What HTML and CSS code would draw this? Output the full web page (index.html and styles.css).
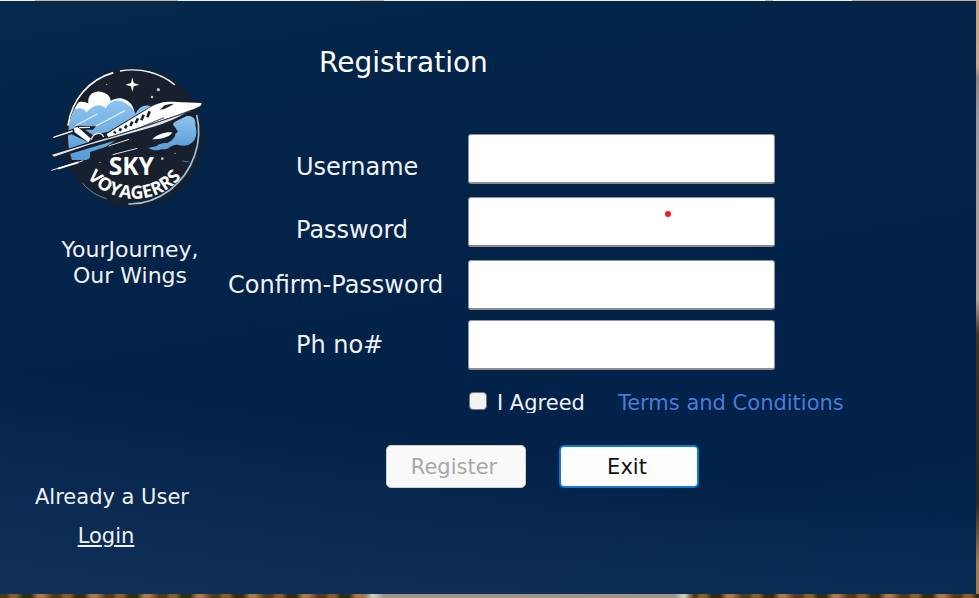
FILE: index.html
```html
<!DOCTYPE html>
<html lang="en">
<head>
<meta charset="utf-8">
<title>Sky Voyagerrs</title>
<link rel="stylesheet" href="styles.css">
</head>
<body>
<div class="panel">
  <aside class="side">
    <div class="brand">
      <svg class="logo" viewBox="0 0 540 495" role="img" aria-label="Sky Voyagerrs">
        <defs>
          <clipPath id="disc"><circle cx="280" cy="247" r="196"/></clipPath>
          <path id="arc" d="M96 244 A187 187 0 0 0 470 244"/>
          <linearGradient id="sky" x1="0" y1="0" x2="0" y2="1">
            <stop offset="0" stop-color="#8fc4ee"/><stop offset="1" stop-color="#559bd6"/>
          </linearGradient>
        </defs>
        <circle cx="280" cy="247" r="210" fill="#17202c"/>
        <g clip-path="url(#disc)">
          <path fill="#fff" d="M85 165 C105 140 125 135 145 145 C142 120 160 108 180 110 C203 112 213 128 212 138 C235 122 260 130 274 148 C285 165 285 178 280 195 L80 215Z"/>
          <path fill="url(#sky)" d="M85 180 C95 160 125 150 140 172 C155 152 180 142 197 160 C207 138 232 130 252 142 C270 152 284 165 287 177 C295 155 318 145 336 156 L350 160 L250 240 L140 315 L70 315Z"/>
          <path fill="url(#sky)" d="M400 205 C430 175 470 175 466 210 C480 260 445 280 415 270 C395 265 390 285 365 283 C350 290 330 283 325 278 L355 272 L340 264 L382 264 C405 252 412 238 400 225Z"/>
        </g>
        <path fill="none" stroke="#f4f7fa" stroke-width="5" d="M84 212 C95 135 145 75 220 53"/>
        <path fill="none" stroke="#f4f7fa" stroke-width="4" d="M240 48 C300 38 360 52 405 90"/>
        <path fill="none" stroke="#91c4e6" stroke-width="5" d="M470 180 C490 260 460 350 390 405 C350 435 305 448 265 447"/>
        <path fill="none" stroke="#4f8ec0" stroke-width="3" d="M128 385 C148 408 170 422 200 431"/>
        <path fill="#fff" d="M277 67 L281 84 L298 89 L281 94 L277 111 L273 94 L256 89 L273 84Z"/>
        <g fill="#b8c8d5"><circle cx="355" cy="104" r="5"/><circle cx="336" cy="126" r="4"/><circle cx="200" cy="88" r="2"/><circle cx="367" cy="311" r="4"/><circle cx="180" cy="322" r="2"/><circle cx="405" cy="295" r="2"/></g>
        <path stroke="#d9edfb" stroke-width="4" d="M105 213 L172 177 M168 213 L256 166"/>
        <path fill="#17202c" d="M30 250 L45 238 L98 222 L110 212 L168 214 L158 224 L135 224 L158 240 L205 230 L325 158 C345 142 370 136 400 138 L485 140 C500 145 488 158 470 165 C420 195 380 215 330 226 L40 311 L26 300 L145 262 L95 238Z"/>
        <path fill="#fff" d="M200 237 L318 165 C350 141 380 139 410 141 L484 144 C489 151 472 159 450 166 C415 180 370 196 325 209 L205 247Z"/>
        <path fill="#dfe4e9" d="M36 299 L150 265 L310 215 L440 172 C405 194 360 211 325 220 L145 270 L42 305Z"/>
        <path stroke="#39434f" stroke-width="3" d="M200 250 L325 211 L452 168 M290 222 L372 188"/>
        <path fill="#fff" d="M101 218 L114 217 L153 251 L145 262 L104 232Z"/>
        <path stroke="#f2f4f6" stroke-width="4" d="M40 247 L98 228 M117 218 L150 217"/>
        <path fill="none" stroke="#eef2f5" stroke-width="4" d="M154 254 C158 234 183 228 191 246"/>
        <path fill="#17202c" d="M360 164 L374 151 Q386 146 402 146 L391 153 L373 162Z"/>
        <path stroke="#17202c" stroke-width="8" d="M329 169 L322 187 M311 179 L304 196 M294 190 L287 204 M277 200 L271 213 M260 211 L255 220 M243 220 L239 228 M226 229 L223 235"/>
        <path fill="#17202c" d="M150 291 L325 235 L402 212 L414 230 L373 263 L320 280 L150 311Z"/>
        <path fill="#f4f6f7" d="M337 253 C355 234 384 229 397 233 C388 247 362 252 337 253Z"/>
        <path stroke="#dce4ea" stroke-width="3" d="M206 273 L267 253 M218 299 L292 280 M34 346 L130 317"/>
        <path stroke="#fff" stroke-width="5" d="M54 341 L115 322"/>
        <path stroke="#45759b" stroke-width="3" d="M427 318 L448 321"/>
        <text class="logo-sky" x="274" y="359" text-anchor="middle">SKY</text>
        <text class="logo-arc"><textPath href="#arc" startOffset="50%" text-anchor="middle">VOYAGERRS</textPath></text>
      </svg>
      <p class="tagline">YourJourney,<br>Our Wings</p>
    </div>
    <div class="existing">
      <p>Already a User</p>
      <a class="login" href="#login">Login</a>
    </div>
  </aside>
  <main class="main">
    <h1>Registration</h1>
    <form>
      <div class="field">
        <label class="low" for="username">Username</label>
        <input id="username" type="text">
      </div>
      <div class="field">
        <label class="low" for="password">Password</label>
        <div class="marked"><input id="password" type="password"><span class="dot"></span></div>
      </div>
      <div class="field">
        <label class="long" for="confirm">Confirm-Password</label>
        <input id="confirm" type="password">
      </div>
      <div class="field last">
        <label for="phone">Ph no#</label>
        <input id="phone" type="tel">
      </div>
      <div class="consent">
        <input id="agree" type="checkbox">
        <label for="agree">I Agreed</label>
        <a href="#terms">Terms and Conditions</a>
      </div>
      <div class="actions">
        <button class="register" type="submit" disabled>Register</button>
        <button class="exit" type="button">Exit</button>
      </div>
    </form>
  </main>
</div>
</body>
</html>
```
FILE: styles.css
```css
* { box-sizing: border-box; }

body {
  display: flex;
  min-height: 100vh;
  margin: 0;
  padding: 1px 3px 4px 0;
  color: #f0f2f5;
  font: 21px/26px "DejaVu Sans", Verdana, sans-serif;
  /* landscape behind the panel: sky on top, rocks at right, road at the bottom */
  background:
    linear-gradient(90deg, #f5efdf 35px, #d3b58e 35px 178px, #f5efdf 178px 360px, #d3b58e 360px 384px, #f5efdf 384px 765px, #d3b58e 765px 773px, #f5efdf 773px 852px, #cfae88 852px) top / 100% 1px no-repeat,
    linear-gradient(90deg, transparent 362px, #d8cfc8 372px, #a2928d 384px 675px, #d8cfc8 684px, transparent 694px) bottom / 100% 4px no-repeat,
    repeating-linear-gradient(90deg, #4c3a20 0 7px, #80602f 11px 17px, #302a1b 23px 31px, #a47b4c 38px 43px, #4c3a20 53px) bottom / 100% 4px no-repeat,
    linear-gradient(#cda17a, #d0a98b 11%, #8e8589 13%, #9a9ba5 20%, #b5a397 50%, #3b3322 56%, #252a22 84%, #a37b4e 94%);
}

h1, p { margin: 0; }

.panel {
  display: flex;
  flex: 1;
  background:
    linear-gradient(8deg, rgba(19, 51, 90, 0.9) 0%, rgba(16, 48, 88, 0) 30%),
    linear-gradient(170deg, #06284c 0%, #032349 25%, #022249 80%, #052750 100%);
}

.side {
  display: flex;
  flex: 0 0 228px;
  flex-direction: column;
  justify-content: space-between;
  padding: 54px 0 45px;
}

.brand { padding-left: 40px; }
.logo { display: block; width: 180px; height: 165px; }
.logo text { fill: #fff; font-family: "Open Sans", sans-serif; font-weight: 700; }
.logo-sky { font-size: 74px; }
.logo-arc { font-size: 54px; }
.tagline { width: 180px; margin-top: 17px; font-size: 22px; text-align: center; }

.existing {
  display: flex;
  flex-direction: column;
  align-items: center;
  gap: 13px;
  padding-right: 4px;
}
.login { padding-right: 12px; color: inherit; }

.main { flex: 1; min-width: 0; padding: 44px 24px 24px 0; }

h1 {
  margin: 0 0 53px 91px;
  color: #fff;
  font-size: 28px;
  font-weight: 400;
  line-height: 36px;
}

.field {
  display: grid;
  grid-template-columns: 240px minmax(0, 307px);
  align-items: center;
  margin-bottom: 13px;
  font-size: 24px;
}
.field:has(.long) { margin-bottom: 10px; }
.field.last { margin-bottom: 20px; }
.field label { padding-left: 68px; }
.field .low { padding-top: 16px; }
.field .long { padding-left: 0; }

.field input {
  display: block;
  width: 100%;
  height: 50px;
  padding: 0 10px;
  border: 1px solid #8a95a5;
  border-bottom: 2px solid #8d8d8d;
  border-radius: 3px;
  background: #fff;
  color: #111;
  font: inherit;
}

.marked { position: relative; }
.dot {
  position: absolute;
  top: 14px;
  right: 104px;
  width: 6px;
  height: 6px;
  border-radius: 50%;
  background: #ed1c24;
}

.consent { display: flex; padding-left: 241px; }
.consent input {
  appearance: none;
  width: 18px;
  height: 18px;
  margin: 2px 10px 0 0;
  border: 1px solid #777;
  border-radius: 4px;
  background: #f3f3f3;
}
.consent input:checked { background: #0078d4; }
.consent label { height: 23px; margin-right: 33px; overflow: hidden; }
.consent a { color: #4a7bd9; text-decoration: none; }

.actions { display: flex; gap: 33px; margin-top: 29px; padding-left: 158px; }
.actions button {
  width: 140px;
  height: 43px;
  padding: 0 4px 0 0;
  border: 1px solid #d0d0d0;
  border-radius: 5px;
  background: #f9f9f9;
  font: inherit;
}
.actions .register { color: #a8a8a8; }
.actions .exit { border: 2px solid #0f78d0; background: #fdfdfd; color: #111; }
```
